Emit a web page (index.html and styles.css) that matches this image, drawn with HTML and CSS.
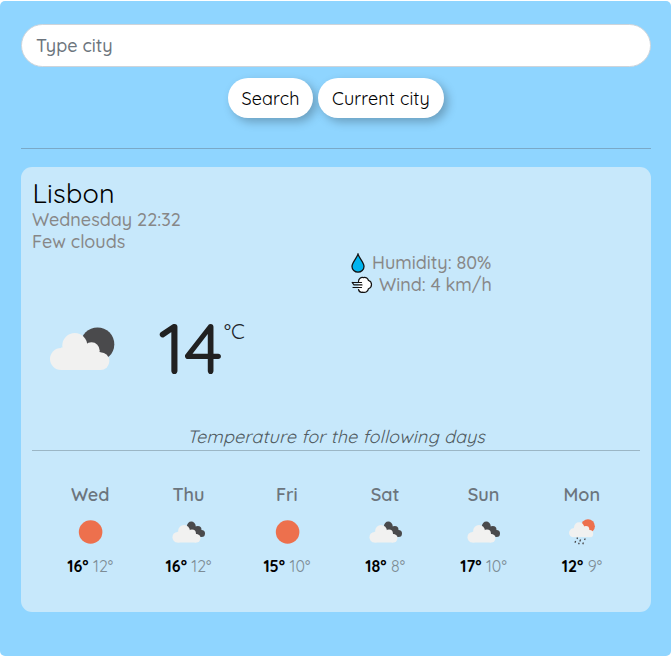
FILE: index.html
```html
<!DOCTYPE html>
<html lang="en">
<head>
<meta charset="utf-8">
<title>Weather</title>
<link rel="stylesheet" href="styles.css">
</head>
<body>
<svg class="defs" aria-hidden="true">
  <symbol id="sun" viewBox="0 0 40 40"><circle cx="20.600" cy="20" r="11.800" fill="#ed704d"/></symbol>
  <symbol id="cloud" viewBox="0 0 60 38"><circle cx="11" cy="26.500" r="11"/><circle cx="24.800" cy="13" r="12.500"/><circle cx="41.500" cy="18" r="8.200"/><circle cx="50.500" cy="28.600" r="8.900"/><path d="M11 15H41L50.500 20V37.500H11Z"/></symbol>
  <symbol id="clouds" viewBox="0 0 40 40">
    <g fill="#4a4a4c"><circle cx="23.300" cy="14" r="4.400"/><circle cx="29.800" cy="17.800" r="3.700"/><circle cx="33.500" cy="21.600" r="3.500"/><path d="M22.500 11L35.500 20L31.500 25L20.500 19Z"/></g>
    <use href="#cloud" x="4.300" y="12.500" width="28.500" height="18.500" fill="#f1f1f0"/>
  </symbol>
  <symbol id="rain" viewBox="0 0 40 40">
    <circle cx="26" cy="14.200" r="6.900" fill="#ed704d"/>
    <use href="#cloud" x="7" y="10" width="24.500" height="15.500" fill="#f1f1f0"/>
    <path d="M15.500 25.500l-.4 1.500M23.300 26.500l-.8 1.500M13.600 29l-.6 1.700M18.600 27.500l-.8 2M21.400 30.500l-.6 1.800M17.200 30.800l-.6 1.500" fill="none" stroke="#4a4a4c" stroke-width="1.300"/>
  </symbol>
</svg>
<main class="app">
  <form class="search">
    <input class="field" type="text" placeholder="Type city">
    <div class="buttons">
      <button class="btn" type="button">Search</button>
      <button class="btn btn-wide" type="button">Current city</button>
    </div>
  </form>
  <hr class="divider">
  <section class="card">
    <h1 class="city">Lisbon</h1>
    <p class="line">Wednesday 22:32</p>
    <p class="line">Few clouds</p>
    <div class="details">
      <p class="line detail"><svg class="drop" viewBox="0 0 14 20"><path d="M7 1.200C6 5 1 9.500 1 13.500a6 5.700 0 0 0 12 0C13 9.500 8 5 7 1.200Z" fill="#00b4ee" stroke="#111" stroke-width="1.300"/></svg><span>Humidity: 80%</span></p>
      <p class="line detail"><svg class="wind" viewBox="0 0 22 18"><path d="M7.500 5C7.500 2.500 10 .9 12.500 1.600C15 .9 17 2.500 17.500 4.500C21.800 5.500 21.800 11.500 17.500 12.700C17 15.500 14.500 17 12 16.200C9.500 17 7.200 15.500 7.500 12.500Z" fill="#fff"/><path d="M7.500 5.500C7.500 2.500 10 .9 12.500 1.600C15 .9 17 2.500 17.500 4.500C21.500 5.500 21.500 11.500 17.500 12.700C17 15.500 14.500 17 12 16.200C9.800 16.700 8 15.500 7.500 13.500M1.200 6.500H10.500M1.200 6.500L3 8.900H11M2 11.500H10.500" fill="none" stroke="#111" stroke-width="1.200" stroke-linecap="round"/></svg><span>Wind: 4 km/h</span></p>
    </div>
    <div class="current">
      <svg class="now-icon" viewBox="0 0 66 45"><circle cx="47.500" cy="17.200" r="16.800" fill="#4a4a4c"/><use href="#cloud" x="0" y="5.500" width="60" height="38" fill="#f1f1f0"/></svg>
      <span class="temp">14</span><span class="unit">°C</span>
    </div>
    <p class="caption"><span>Temperature for the following days</span></p>
    <div class="forecast">
      <div class="day"><h2>Wed</h2><svg class="icon"><use href="#sun"/></svg><p><b>16°</b> <span>12°</span></p></div>
      <div class="day"><h2>Thu</h2><svg class="icon"><use href="#clouds"/></svg><p><b>16°</b> <span>12°</span></p></div>
      <div class="day"><h2>Fri</h2><svg class="icon"><use href="#sun"/></svg><p><b>15°</b> <span>10°</span></p></div>
      <div class="day"><h2>Sat</h2><svg class="icon"><use href="#clouds"/></svg><p><b>18°</b> <span>8°</span></p></div>
      <div class="day"><h2>Sun</h2><svg class="icon"><use href="#clouds"/></svg><p><b>17°</b> <span>10°</span></p></div>
      <div class="day"><h2>Mon</h2><svg class="icon"><use href="#rain"/></svg><p><b>12°</b> <span>9°</span></p></div>
    </div>
  </section>
</main>
</body>
</html>
```
FILE: styles.css
```css
* { box-sizing: border-box; }
body { margin: 0; background: #fff; font-family: Quicksand, Lato, sans-serif; font-size: 18px; color: #212529; }
h1, h2, p { margin: 0; font-weight: 400; }
svg { display: block; flex: none; }
.defs { position: absolute; width: 0; height: 0; }
.app { height: 655px; margin-top: 1px; padding: 23px 20px 0 21px; border-radius: 5px; background: #8fd5ff; overflow: hidden; }
.field { display: block; width: 100%; height: 43px; padding: 0 14px; border: 1px solid #ced4da; border-radius: 22px; background: #fff; font: inherit; font-weight: 500; outline: 0; }
.field::placeholder { color: #6c757d; opacity: 1; }
.buttons { display: flex; justify-content: center; gap: 5px; margin-top: 11px; }
.btn { display: flex; align-items: center; justify-content: center; width: 85px; height: 40px; padding: 0; border: 0; border-radius: 20px; background: #fff; color: #000; font: inherit; letter-spacing: .1px; white-space: nowrap; box-shadow: 4px 4px 10px rgba(0, 0, 0, .25); }
.btn-wide { width: 126px; }
.divider { height: 1px; margin: 30px 0 18px; border: 0; background: #7aa9c8; }
.card { height: 445px; padding: 12px 11px 0; border-radius: 11px; background: #c7e8fb; }
.city { height: 30px; padding-left: .5px; font-size: 27px; line-height: 29px; letter-spacing: .2px; color: #000; }
.line { height: 22px; line-height: 22px; font-weight: 500; color: #878787; white-space: nowrap; }
.details { margin: -1px 0 0 319px; }
.detail { display: flex; align-items: center; }
.drop { width: 14px; height: 20px; margin-right: 7px; }
.wind { width: 22px; height: 18px; margin-right: 6px; }
.current { display: flex; align-items: flex-start; height: 129px; padding: 30px 0 0 18px; }
.now-icon { width: 66px; height: 45px; margin-top: 1px; }
.temp { width: 66px; margin: -3px 0 0 42px; font-size: 71px; font-weight: 500; line-height: 50px; color: #212121; }
.unit { margin-top: -5px; font-size: 21px; line-height: 20px; }
.caption { height: 26px; border-bottom: 1px solid #9bb6c5; text-align: center; line-height: 24px; font-style: italic; letter-spacing: .18px; color: #505b61; }
.forecast { display: grid; grid-template-columns: repeat(6, 1fr); padding: 32px 9px 0; }
.day { text-align: center; }
.day h2 { height: 24px; line-height: 24px; font-size: 18px; font-weight: 600; color: #6c757d; }
.icon { width: 40px; height: 40px; margin: 5px auto 0; }
.day p { margin-top: 3px; font-size: 16px; line-height: 22px; color: #7d8c95; white-space: nowrap; }
.day b { color: #000; }
```
